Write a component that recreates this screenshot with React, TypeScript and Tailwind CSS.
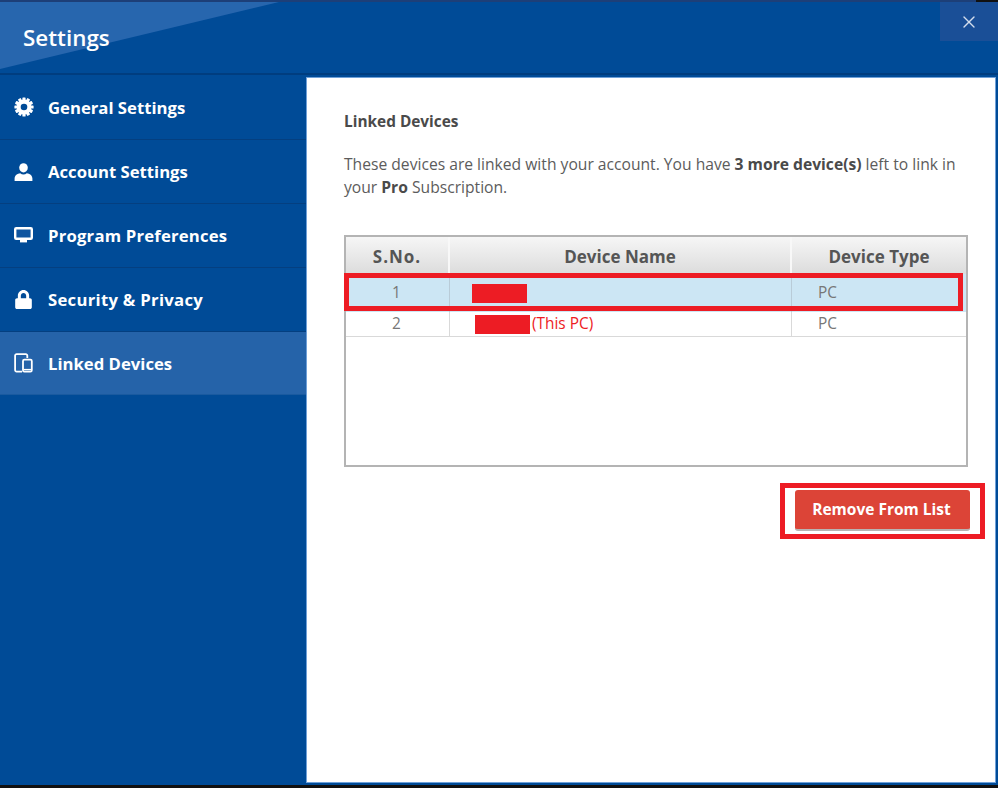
import { X } from "lucide-react";
import { FaLock } from "react-icons/fa";
import type { ReactNode } from "react";

const GearIcon = () => (
  <svg width="20" height="20" viewBox="0 0 20 20" fill="white">
    {[0, 30, 60, 90, 120, 150].map((deg) => (
      <rect key={deg} x="8.4" y="0.4" width="3.2" height="19.2" rx="0.6" transform={`rotate(${deg} 10 10)`} />
    ))}
    <circle cx="10" cy="10" r="7.4" />
    <circle cx="10" cy="10" r="3.3" fill="#004b97" />
  </svg>
);

const UserIcon = () => (
  <svg width="19" height="18" viewBox="0 0 19 18" fill="white">
    <ellipse cx="9.5" cy="4.8" rx="4.3" ry="4.6" />
    <path d="M0.6 18v-2.6c0-3 2.8-4.8 5.6-5.2 1 .8 2.1 1.2 3.3 1.2s2.3-.4 3.3-1.2c2.8.4 5.6 2.2 5.6 5.2V18z" />
  </svg>
);

const MonitorIcon = () => (
  <svg width="19" height="17" viewBox="0 0 19 17" fill="none">
    <rect x="1.2" y="1.2" width="16.6" height="10.6" rx="1" fill="#0f559f" stroke="white" strokeWidth="2.4" />
    <path d="M6 13h7v2.4H6z" fill="white" />
  </svg>
);

const DevicesIcon = () => (
  <svg width="19" height="20" viewBox="0 0 19 20" fill="none" stroke="white" strokeWidth="1.8">
    <path d="M8 18.6H2.6a1.5 1.5 0 0 1-1.5-1.5V2.6a1.5 1.5 0 0 1 1.5-1.5h9.2a1.5 1.5 0 0 1 1.5 1.5V5" />
    <rect x="9" y="6.6" width="8.8" height="12" rx="1.4" />
    <path d="M9.5 16.6h8" strokeWidth="1.4" />
  </svg>
);

const navItems: { label: string; icon: ReactNode; rowClass: string; textClass: string }[] = [
  { label: "General Settings", icon: <GearIcon />, rowClass: "h-[65px]", textClass: "pt-[2px]" },
  { label: "Account Settings", icon: <UserIcon />, rowClass: "h-[64px]", textClass: "" },
  { label: "Program Preferences", icon: <MonitorIcon />, rowClass: "h-[64px]", textClass: "tracking-[0.2px]" },
  { label: "Security & Privacy", icon: <FaLock size={19} />, rowClass: "h-[64px]", textClass: "tracking-[0.28px]" },
];

const font = "font-['Open_Sans',sans-serif]";

export default function App() {
  return (
    <div className={`${font} w-[998px] h-[788px] bg-[#111] overflow-hidden relative`}>
      <div className="h-[785px] bg-[#004b97] flex flex-col relative">
        <div className="h-[2px] flex shrink-0">
          <div className="flex-1 bg-[#1d3f78]" />
          <div className="w-[22px] bg-[#111]" />
        </div>
        {/* header */}
        <div className="h-[73px] shrink-0 relative border-b-2 border-[#003d7f]">
          <svg className="absolute left-0 top-0" width="300" height="71" viewBox="0 0 300 71">
            <polygon points="0,0 279,0 0,67" fill="#2766ae" />
          </svg>
          <div className="relative pl-[23px] pt-[20px] text-[22.4px] leading-[32px] font-semibold text-white">Settings</div>
          <div className="absolute right-0 top-0 w-[58px] h-[39px] bg-[#1a4f97] flex items-center justify-center text-[#d3deed]">
            <X size={20} strokeWidth={1.6} />
          </div>
        </div>

        <div className="flex flex-1 min-h-0">
          {/* sidebar */}
          <div className="w-[306px] shrink-0 text-white">
            {navItems.map((item) => (
              <div key={item.label} className={`${item.rowClass} flex items-center border-b border-[#043f80]`}>
                <div className="w-[48px] pl-[14px] flex items-center">{item.icon}</div>
                <span className={`text-[16.7px] font-bold ${item.textClass}`}>{item.label}</span>
              </div>
            ))}
            <div className="h-[63px] flex items-center bg-[#2563a9] border-b border-[#1a5a9f]">
              <div className="w-[48px] pl-[14px] flex items-center">
                <DevicesIcon />
              </div>
              <span className="text-[16.7px] font-bold pt-[2px]">Linked Devices</span>
            </div>
          </div>

          {/* content */}
          <div className="flex-1 mt-[2px] mb-[2px] mr-[2px] bg-white border border-[#6fa0d8] pl-[37px] pr-[27px] text-[#555]">
            <div className="pt-[33px] text-[15.4px] leading-[22px] font-bold text-[#4a4a4a]">Linked Devices</div>
            <p className="mt-[20px] text-[15.65px] leading-[23px] text-[#5c5c5c] whitespace-nowrap">
              These devices are linked with your account. You have <b className="text-[#4a4a4a]">3 more device(s)</b> left to link in
              <br />
              your <b className="text-[#4a4a4a]">Pro</b> Subscription.
            </p>

            <div className="mt-[36px] h-[232px] border-2 border-[#b4b4b4]">
              <div className="grid grid-cols-[104px_342px_1fr] h-[37px] bg-gradient-to-b from-[#f6f6f6] to-[#dcdcdc] text-[17px] font-bold text-[#555] text-center items-center">
                <div className="h-full flex items-center justify-center pt-[3px] tracking-[1px] border-r-2 border-[#f8f8f8]">S.No.</div>
                <div className="h-full flex items-center justify-center pt-[3px] border-r-2 border-[#f8f8f8]">Device Name</div>
                <div className="pt-[3px]">Device Type</div>
              </div>
              <div className="grid grid-cols-[104px_342px_1fr] h-[38px] bg-[#cce6f4] text-[15.4px] text-[#777] items-center">
                <div className="h-full flex items-center justify-center pr-[2px] border-r border-[#b9ccd8]">1</div>
                <div className="h-full flex items-center border-r border-[#b9ccd8] pl-[22px]">
                  <span className="w-[55px] h-[19px] bg-[#ed1c24]" />
                </div>
                <div className="pl-[26px]">PC</div>
              </div>
              <div className="grid grid-cols-[104px_342px_1fr] h-[25px] text-[15.4px] text-[#777] items-center border-b border-[#d9d9d9]">
                <div className="h-full flex items-center justify-center pr-[2px] border-r border-[#d9d9d9]">2</div>
                <div className="h-full flex items-center border-r border-[#d9d9d9] pl-[25px]">
                  <span className="w-[55px] h-[19px] bg-[#ed1c24]" />
                  <span className="ml-[2px] text-[#ed1c24]">(This PC)</span>
                </div>
                <div className="pl-[26px]">PC</div>
              </div>
            </div>

            <div className="mt-[23px] flex justify-end">
              <button className="w-[175px] h-[41px] mr-[-2px] pt-[1px] pr-[2px] rounded-[3px] bg-[#dc4437] border-b-2 border-[#b9b3b3] text-white text-[15.5px] font-bold">
                Remove From List
              </button>
            </div>
          </div>
        </div>
      </div>

      {/* annotation boxes on top of the shot */}
      <div className="absolute left-[344px] top-[273px] w-[619px] h-[38px] border-[5px] border-[#ed1c24]" />
      <div className="absolute left-[780px] top-[483px] w-[205px] h-[56px] border-[5px] border-[#ed1c24]" />
    </div>
  );
}
